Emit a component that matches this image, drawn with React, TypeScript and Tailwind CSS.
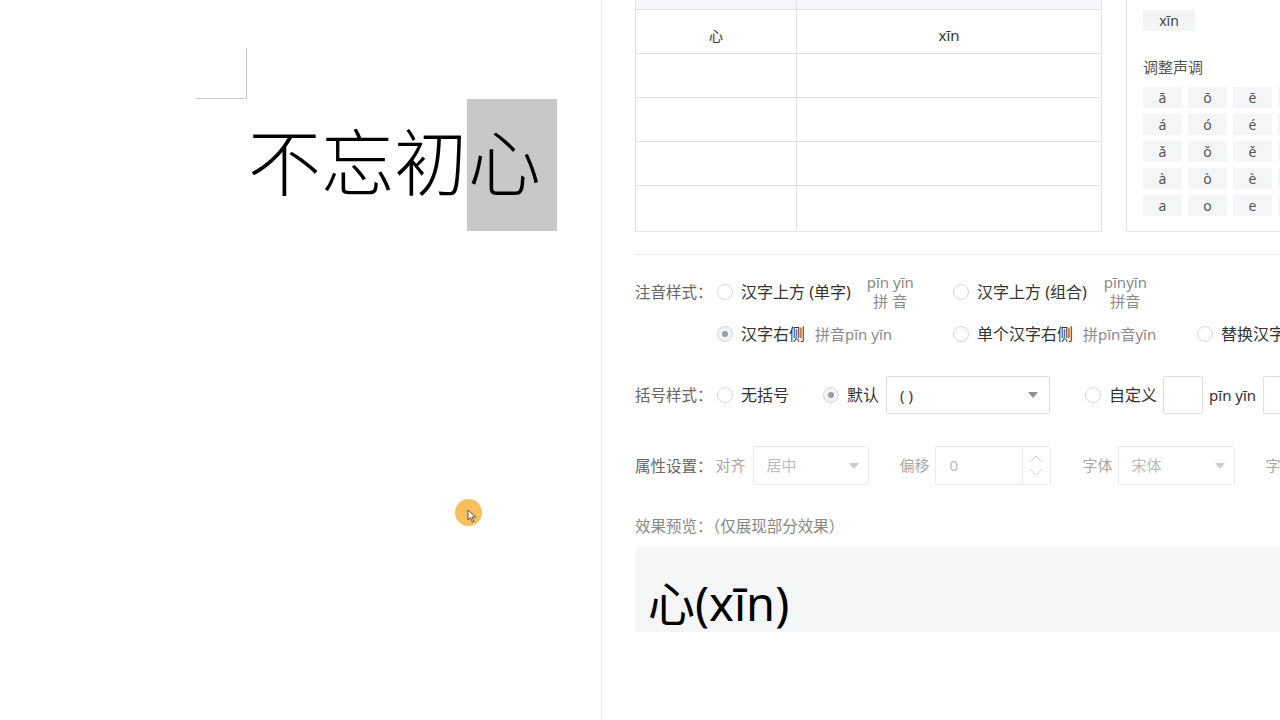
import React from "react";

const F = { fontFamily: '"Noto Sans", "Noto Sans CJK SC", sans-serif' } as React.CSSProperties;
const CJK = { fontFamily: '"Noto Sans CJK SC", sans-serif' } as React.CSSProperties;

function Radio({ checked }: { checked?: boolean }) {
  return (
    <span
      className={
        "flex h-[16px] w-[16px] shrink-0 items-center justify-center rounded-full border " +
        (checked ? "border-[#d4d7de] bg-[#f2f3f5]" : "border-[#d4d7de] bg-white")
      }
    >
      {checked && <span className="block h-[6px] w-[6px] rounded-full bg-[#9a9da3]" />}
    </span>
  );
}

function Caret({ light }: { light?: boolean }) {
  return (
    <svg width="10" height="6" viewBox="0 0 10 6" className="shrink-0">
      <path d="M0 0 L10 0 L5 6 Z" fill={light ? "#c8cbd0" : "#8d9096"} />
    </svg>
  );
}

const tones = [
  ["ā", "ō", "ē", "ī"],
  ["á", "ó", "é", "í"],
  ["ǎ", "ǒ", "ě", "ǐ"],
  ["à", "ò", "è", "ì"],
  ["a", "o", "e", "i"],
];

export default function App() {
  return (
    <div className="relative flex h-[720px] w-[1280px] overflow-hidden bg-white" style={F}>
      {/* Left document area */}
      <div className="h-full w-[601px] shrink-0">
        <div className="pl-[196px] pt-[48px]">
          <div className="h-[51px] w-[51px] border-b border-r border-[#c9c9c9]" />
          <div className="ml-[52px] flex text-[73px] font-light text-black" style={CJK}>
            <span className="block h-[132px] leading-[118px]">不忘初</span>
            <span className="block h-[132px] w-[90px] bg-[#c8c8c8] pl-[1px] leading-[118px]">心</span>
          </div>
        </div>
      </div>

      {/* Right panel */}
      <div className="h-full flex-1 overflow-hidden border-l border-[#ececec] pl-[33px]">
        {/* top section */}
        <div className="flex w-[800px] gap-[24px]">
          <div className="w-[467px] shrink-0 border-x border-b border-[#dfe2e7]">
            <div className="flex h-[10px] border-b border-[#dfe2e7] bg-[#f5f6f9]">
              <div className="w-[161px] border-r border-[#dfe2e7]" />
              <div className="flex-1" />
            </div>
            {[0, 1, 2, 3, 4].map((i) => (
              <div
                key={i}
                className={"flex h-[44px] text-[14px] text-[#333] " + (i < 4 ? "border-b border-[#dfe2e7]" : "")}
              >
                <div className="flex w-[161px] items-center justify-center border-r border-[#dfe2e7] pt-[7px]">
                  {i === 0 ? "心" : ""}
                </div>
                <div className="flex flex-1 items-center justify-center pt-[7px] text-[15px]">{i === 0 ? "xīn" : ""}</div>
              </div>
            ))}
          </div>
          <div className="h-[232px] w-[300px] shrink-0 rounded-bl-[3px] border-b border-l border-[#dfe2e7] pl-[16px] pt-[10px]">
            <div className="flex h-[21px] w-[52px] items-center justify-center bg-[#f3f4f6] text-[14px] text-[#444]">
              xīn
            </div>
            <div className="mt-[25px] text-[15px] leading-[22px] text-[#555]" style={CJK}>调整声调</div>
            <div className="mt-[9px] flex flex-col gap-[6px]">
              {tones.map((row, r) => (
                <div key={r} className="flex gap-[6px]">
                  {row.map((t, c) => (
                    <div
                      key={c}
                      className="flex h-[21px] w-[39px] items-center justify-center bg-[#f4f5f7] text-[14px] text-[#555]"
                    >
                      {t}
                    </div>
                  ))}
                </div>
              ))}
            </div>
          </div>
        </div>

        {/* divider */}
        <div className="mt-[22px] w-[800px] border-t border-[#ebedf0]" />

        {/* 注音样式 */}
        <div className="flex w-[800px] pt-[17px]">
          <div className="flex h-[40px] w-[82px] shrink-0 items-center text-[15.5px] text-[#666]" style={CJK}>注音样式：</div>
          <div className="flex flex-col gap-[2px]">
            <div className="flex h-[40px] items-center">
              <div className="flex w-[236px] items-center">
                <Radio />
                <span className="ml-[8px] text-[16px] text-[#333]">汉字上方 (单字)</span>
                <span className="ml-[16px] flex flex-col items-center text-[15px] leading-[19px] text-[#8a8a8a]">
                  <span>pīn yīn</span>
                  <span>拼 音</span>
                </span>
              </div>
              <div className="flex items-center">
                <Radio />
                <span className="ml-[8px] text-[16px] text-[#333]">汉字上方 (组合)</span>
                <span className="ml-[17px] flex flex-col items-center text-[15px] leading-[19px] text-[#8a8a8a]">
                  <span>pīnyīn</span>
                  <span>拼音</span>
                </span>
              </div>
            </div>
            <div className="flex h-[40px] items-center">
              <div className="flex w-[236px] items-center">
                <Radio checked />
                <span className="ml-[8px] text-[16px] text-[#333]">汉字右侧</span>
                <span className="ml-[10px] text-[15px] text-[#8a8a8a]">拼音pīn yīn</span>
              </div>
              <div className="flex w-[244px] items-center">
                <Radio />
                <span className="ml-[8px] text-[16px] text-[#333]">单个汉字右侧</span>
                <span className="ml-[10px] text-[15px] text-[#8a8a8a]">拼pīn音yīn</span>
              </div>
              <div className="flex items-center whitespace-nowrap">
                <Radio />
                <span className="ml-[8px] text-[16px] text-[#333]">替换汉字</span>
              </div>
            </div>
          </div>
        </div>

        {/* 括号样式 */}
        <div className="mt-[22px] flex h-[38px] w-[800px] items-center whitespace-nowrap">
          <div className="w-[82px] shrink-0 text-[15.5px] text-[#666]" style={CJK}>括号样式：</div>
          <Radio />
          <span className="ml-[8px] text-[16px] text-[#333]">无括号</span>
          <span className="ml-[34px] flex items-center">
            <Radio checked />
          </span>
          <span className="ml-[8px] text-[16px] text-[#333]">默认</span>
          <div className="ml-[7px] flex h-[38px] w-[164px] items-center justify-between rounded-[2px] border border-[#dcdfe6] pl-[13px] pr-[11px] text-[15px] text-[#333]">
            <span>( )</span>
            <Caret />
          </div>
          <span className="ml-[35px] flex items-center">
            <Radio />
          </span>
          <span className="ml-[8px] text-[16px] text-[#333]">自定义</span>
          <div className="ml-[6px] h-[38px] w-[40px] rounded-[2px] border border-[#dcdfe6]" />
          <span className="ml-[6px] text-[15px] text-[#333]">pīn yīn</span>
          <div className="ml-[7px] h-[38px] w-[40px] rounded-[2px] border border-[#dcdfe6]" />
        </div>

        {/* 属性设置 */}
        <div className="mt-[32px] flex h-[39px] w-[800px] items-center whitespace-nowrap">
          <span className="text-[15.5px] text-[#666]" style={CJK}>属性设置：</span>
          <span className="ml-[3px] text-[15px] text-[#a8a8a8]">对齐</span>
          <div className="ml-[7px] flex h-[39px] w-[116px] items-center justify-between rounded-[2px] border border-[#e8eaee] pl-[13px] pr-[9px] text-[15px] text-[#b8bbc0]">
            <span>居中</span>
            <Caret light />
          </div>
          <span className="ml-[31px] text-[15px] text-[#a8a8a8]">偏移</span>
          <div className="ml-[5px] flex h-[39px] w-[116px] items-stretch rounded-[2px] border border-[#e8eaee] text-[15px] text-[#b8bbc0]">
            <span className="flex flex-1 items-center pl-[14px]">0</span>
            <div className="flex w-[28px] flex-col items-center justify-center border-l border-[#e8eaee]">
              <svg width="14" height="8" viewBox="0 0 14 8">
                <path d="M1 7 L7 1 L13 7" stroke="#c8cbd0" strokeWidth="1" fill="none" />
              </svg>
              <svg width="14" height="8" viewBox="0 0 14 8" className="mt-[5px]">
                <path d="M1 1 L7 7 L13 1" stroke="#dadce0" strokeWidth="1" fill="none" />
              </svg>
            </div>
          </div>
          <span className="ml-[32px] text-[15px] text-[#a8a8a8]">字体</span>
          <div className="ml-[5px] flex h-[39px] w-[117px] items-center justify-between rounded-[2px] border border-[#e8eaee] pl-[13px] pr-[9px] text-[15px] text-[#b8bbc0]">
            <span>宋体</span>
            <Caret light />
          </div>
          <span className="ml-[31px] text-[15px] text-[#a8a8a8]">字号</span>
        </div>

        {/* 效果预览 */}
        <div className="mt-[30px] text-[15.5px] leading-[20px] text-[#888]" style={CJK}>效果预览：（仅展现部分效果）</div>
        <div className="mt-[12px] flex h-[85px] w-[800px] items-center bg-[#f5f6f8] pl-[13px] pt-[27px] text-[47px] text-black">
          心(xīn)
        </div>
      </div>

      {/* cursor highlight */}
      <div className="pointer-events-none absolute left-[455px] top-[499px] h-[27px] w-[27px] rounded-full bg-[#f5b84a] opacity-90" />
      <svg className="pointer-events-none absolute left-[467px] top-[509px]" width="10" height="14" viewBox="0 0 10 14">
        <path d="M1 1 L1 11 L3.5 8.5 L5.5 13 L7 12.3 L5 8 L8.5 8 Z" fill="white" stroke="#333" strokeWidth="0.8" />
      </svg>
    </div>
  );
}
